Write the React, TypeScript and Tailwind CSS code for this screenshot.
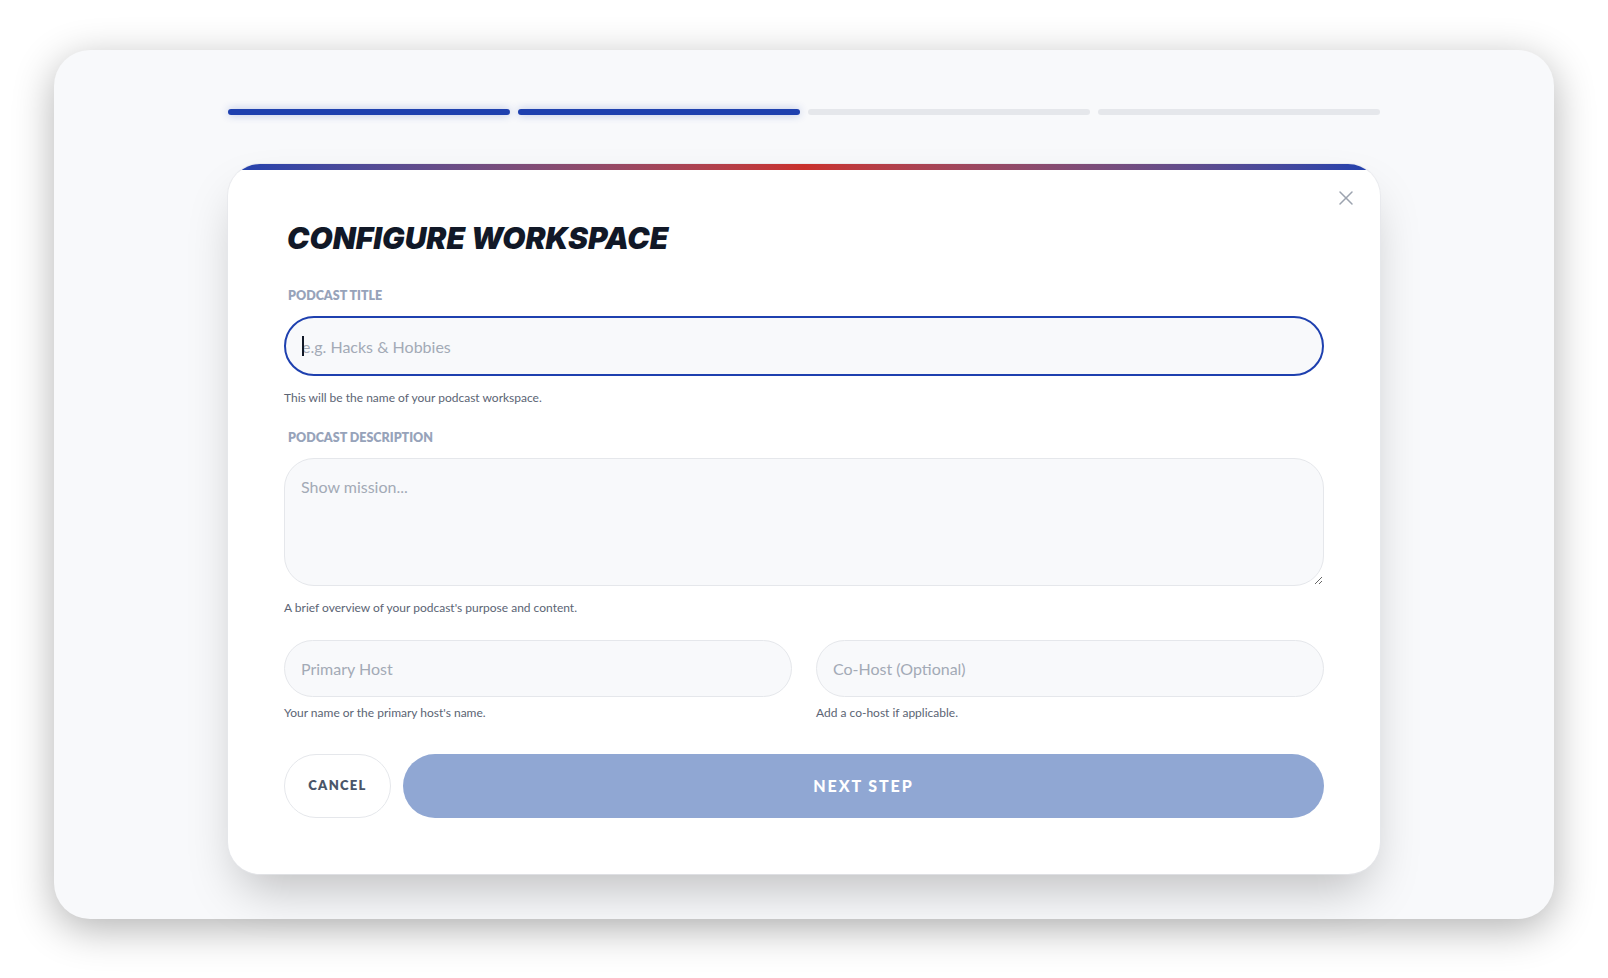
import { X } from "lucide-react"

const steps = [true, true, false, false]

function Helper({ children }: { children: React.ReactNode }) {
  return <p className="text-[12px] leading-4 text-[#5b6474]">{children}</p>
}

export default function App() {
  return (
    <div
      className="w-[1608px] h-[978px] bg-white pt-[50px] px-[54px]"
      style={{ fontFamily: "Lato, 'Open Sans', sans-serif" }}
    >
      <div className="h-[869px] rounded-[36px] bg-[#f8f9fb] shadow-[0_10px_40px_rgba(0,0,0,0.3)] flex flex-col items-center pt-[59px]">
        {/* step indicator */}
        <div className="w-[1152px] flex gap-2">
          {steps.map((done, i) => (
            <div
              key={i}
              className={
                done
                  ? "flex-1 h-1.5 rounded-full bg-[#1e40af] shadow-[0_0_8px_rgba(30,64,175,0.3)]"
                  : "flex-1 h-1.5 rounded-full bg-[#e5e7eb]"
              }
            />
          ))}
        </div>

        <div className="relative mt-[49px] w-[1152px] rounded-[32px] bg-white overflow-hidden shadow-[0_25px_50px_-12px_rgba(0,0,0,0.25)] ring-1 ring-gray-200/70">
          <div className="h-1.5 bg-gradient-to-r from-[#1e40af] via-[#c9302c] to-[#1e40af]" />
          <button className="absolute top-[22px] right-[22px] text-[#9ca3af]">
            <X size={24} strokeWidth={1.5} />
          </button>

          <div className="px-14 pt-[50px] pb-14">
            <h1
              className="pl-[3px] text-[30px] leading-9 font-black italic text-[#111827] mb-8"
              style={{ fontFamily: "Inter, sans-serif" }}
            >
              CONFIGURE WORKSPACE
            </h1>

            <label className="block text-[12.5px] leading-4 font-extrabold text-[#97a3ba] pl-1 mb-3">PODCAST TITLE</label>
            <div className="relative">
              <input
                placeholder="e.g. Hacks & Hobbies"
                className="w-full h-[60px] rounded-full border-2 border-[#1e40af] bg-[#f8f9fb] px-4 text-base text-gray-800 placeholder:text-[#a3aab6] outline-none"
              />
              {/* text caret */}
              <span className="absolute left-[18px] top-[20px] w-[1.5px] h-5 bg-[#111827]" />
            </div>
            <div className="mt-3.5">
              <Helper>This will be the name of your podcast workspace.</Helper>
            </div>

            <label className="block mt-6 text-[12.5px] leading-4 font-extrabold text-[#97a3ba] pl-1 mb-3">PODCAST DESCRIPTION</label>
            <textarea
              placeholder="Show mission..."
              className="block w-full h-[128px] rounded-[30px] border border-[#e5e7eb] bg-[#f8f9fb] p-4 text-base text-gray-800 placeholder:text-[#a3aab6] outline-none"
            />
            <div className="mt-3.5">
              <Helper>A brief overview of your podcast's purpose and content.</Helper>
            </div>

            <div className="mt-6 grid grid-cols-2 gap-6">
              <div>
                <input
                  placeholder="Primary Host"
                  className="w-full h-[57px] rounded-full border border-[#e5e7eb] bg-[#f8f9fb] px-4 text-base text-gray-800 placeholder:text-[#a3aab6] outline-none"
                />
                <div className="mt-2">
                  <Helper>Your name or the primary host's name.</Helper>
                </div>
              </div>
              <div>
                <input
                  placeholder="Co-Host (Optional)"
                  className="w-full h-[57px] rounded-full border border-[#e5e7eb] bg-[#f8f9fb] px-4 text-base text-gray-800 placeholder:text-[#a3aab6] outline-none"
                />
                <div className="mt-2">
                  <Helper>Add a co-host if applicable.</Helper>
                </div>
              </div>
            </div>

            <div className="mt-[33px] flex gap-3">
              <button className="w-[107px] h-16 rounded-full border border-[#e5e7eb] bg-white text-[13px] font-extrabold tracking-[0.1em] text-[#4a5568]">
                CANCEL
              </button>
              <button className="flex-1 h-16 rounded-full bg-[#90a7d3] text-base font-black tracking-[0.12em] text-white">
                NEXT STEP
              </button>
            </div>
          </div>
        </div>
      </div>
    </div>
  )
}
